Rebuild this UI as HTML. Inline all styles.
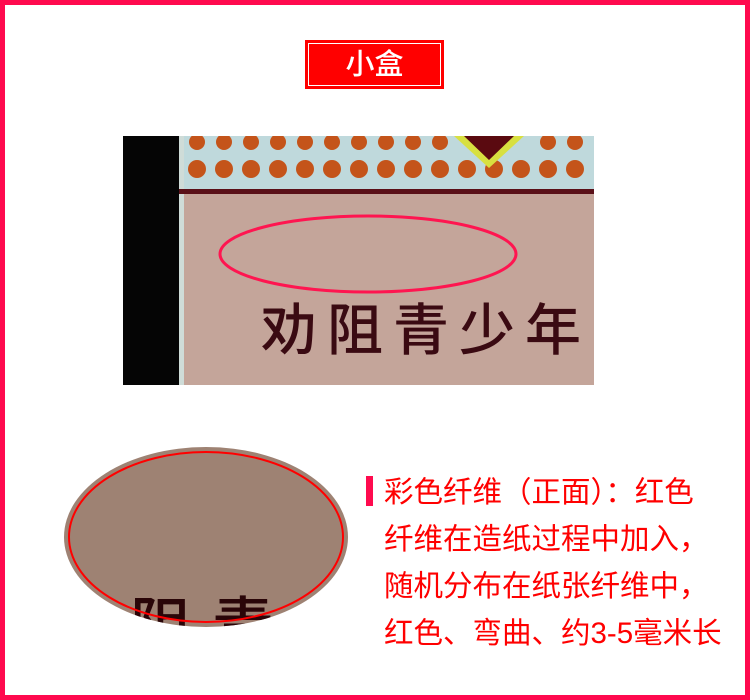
<!DOCTYPE html>
<html><head><meta charset="utf-8"><style>
body{margin:0;width:750px;height:700px;position:relative;background:#fff;overflow:hidden;font-family:"Liberation Sans","Noto Sans CJK SC",sans-serif}
.frame{position:absolute;left:0;top:0;width:740px;height:690px;border:5px solid #ff0a4e}
.title{position:absolute;left:305px;top:40px;width:139px;height:49px;background:#ff0000}
.title div{position:absolute;left:3px;top:3px;right:3px;bottom:3px;border:1px solid #fff;color:#fff;font-size:29px;font-weight:500;text-align:center;line-height:43px}
.photo{position:absolute;left:123px;top:136px;width:471px;height:249px;background:#c4a59a;overflow:hidden}
.txt{position:absolute;left:384px;top:469px;color:#ff0000;font-size:29.5px;line-height:47px;white-space:nowrap}
.bar{position:absolute;left:366px;top:476px;width:7px;height:30px;background:#ff0a4e}
</style></head><body>
<div class="frame"></div>
<div class="title"><div>小盒</div></div>
<div class="photo">
<div style="position:absolute;left:0;top:0;width:56px;height:249px;background:#050505"></div>
<div style="position:absolute;left:56px;top:0;width:5px;height:249px;background:#cfdcd8"></div>
<div style="position:absolute;left:61px;top:0;width:410px;height:54px;background:#bfd9dc"></div>
<svg style="position:absolute;left:56px;top:0" width="415" height="60">
<g fill="#c4541a">
<circle cx="18" cy="6" r="8"/><circle cx="45" cy="6" r="8"/><circle cx="72" cy="6" r="8"/><circle cx="99" cy="6" r="8"/><circle cx="126" cy="6" r="8"/><circle cx="153" cy="6" r="8"/><circle cx="180" cy="6" r="8"/><circle cx="207" cy="6" r="8"/><circle cx="234" cy="6" r="8"/><circle cx="261" cy="6" r="8"/><circle cx="369" cy="6" r="8"/><circle cx="396" cy="6" r="8"/>
<circle cx="18" cy="33" r="9"/><circle cx="45" cy="33" r="9"/><circle cx="72" cy="33" r="9"/><circle cx="99" cy="33" r="9"/><circle cx="126" cy="33" r="9"/><circle cx="153" cy="33" r="9"/><circle cx="180" cy="33" r="9"/><circle cx="207" cy="33" r="9"/><circle cx="234" cy="33" r="9"/><circle cx="261" cy="33" r="9"/><circle cx="288" cy="33" r="9"/><circle cx="315" cy="33" r="9"/><circle cx="342" cy="33" r="9"/><circle cx="369" cy="33" r="9"/><circle cx="396" cy="33" r="9"/>
</g>
<path d="M275 0 L310 32 L345 0 Z" fill="#d8e040"/><path d="M285 0 L310 24 L335 0 Z" fill="#5a0a10"/>
<rect x="0" y="53" width="415" height="5" fill="#5a1018"/>
</svg>
<div style="position:absolute;left:138px;top:150px;font-size:56px;font-weight:500;color:#3a0a12;letter-spacing:10px;white-space:nowrap">劝阻青少年</div>
<svg style="position:absolute;left:0;top:0" width="471" height="249"><ellipse cx="245" cy="118" rx="148" ry="38" fill="none" stroke="#ff1550" stroke-width="3"/></svg>
</div>
<svg style="position:absolute;left:60px;top:443px" width="295" height="190">
<defs><clipPath id="c"><ellipse cx="146" cy="94" rx="142" ry="90"/></clipPath></defs>
<ellipse cx="146" cy="94" rx="142" ry="90" fill="#9e8273"/>
<g clip-path="url(#c)"><text x="70" y="205" font-size="62" font-weight="500" fill="#2a0508" font-family="Noto Sans CJK SC" letter-spacing="20">阻青</text></g>
<ellipse cx="146" cy="94" rx="137" ry="85" fill="none" stroke="#ff0000" stroke-width="2"/>
</svg>
<div class="bar"></div>
<div class="txt">彩色纤维（正面）：红色<br>纤维在造纸过程中加入，<br>随机分布在纸张纤维中，<br>红色、弯曲、约3-5毫米长</div>
</body></html>
